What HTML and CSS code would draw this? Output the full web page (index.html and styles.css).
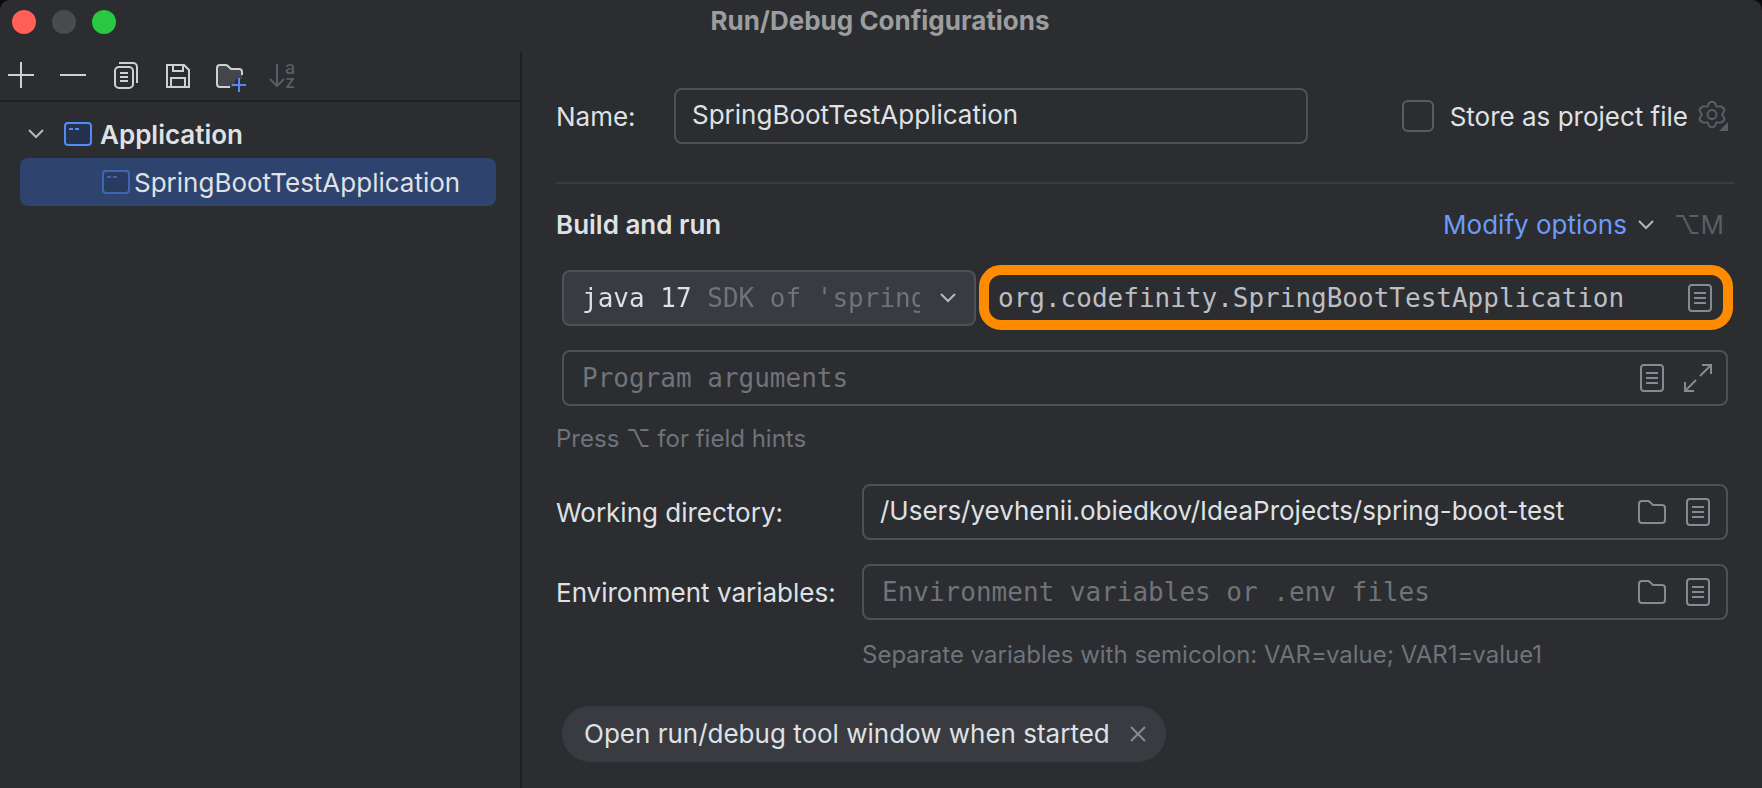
FILE: index.html
```html
<!DOCTYPE html>
<html lang="en">
<head>
<meta charset="utf-8">
<title>Run/Debug Configurations</title>
<link rel="stylesheet" href="styles.css">
</head>
<body>
<svg class="sprite" aria-hidden="true">
  <symbol id="doc" viewBox="0 0 24 28">
    <rect x="1" y="1" width="22" height="26" rx="3"/>
    <path d="M6 9h12M6 14h12M6 19h12"/>
  </symbol>
  <symbol id="folder" viewBox="0 0 28 24">
    <path d="M1 4a3 3 0 0 1 3-3h5.600a3 3 0 0 1 2 .8L15 5h9a3 3 0 0 1 3 3v12a3 3 0 0 1-3 3H4a3 3 0 0 1-3-3z"/>
  </symbol>
  <symbol id="chevron" viewBox="0 0 16 10">
    <path d="M1 1l7 7 7-7"/>
  </symbol>
  <symbol id="app" viewBox="0 0 28 24">
    <rect x="1" y="1" width="26" height="22" rx="3"/>
    <path d="M5 7h4M11 7h4"/>
  </symbol>
</svg>
<div class="window">
  <header class="titlebar">
    <div class="lights">
      <button class="light close" aria-label="Close"></button>
      <button class="light minimize" aria-label="Minimize" disabled></button>
      <button class="light maximize" aria-label="Zoom"></button>
    </div>
    <h1 class="title">Run/Debug Configurations</h1>
  </header>

  <div class="body">
    <aside class="sidebar">
      <div class="toolbar">
        <button class="tool" aria-label="Add"><svg viewBox="0 0 32 32"><path d="M2 16h26M15 3v26"/></svg></button>
        <button class="tool" aria-label="Remove"><svg viewBox="0 0 32 32"><path d="M2 16h26"/></svg></button>
        <button class="tool" aria-label="Copy"><svg viewBox="0 0 32 32"><rect x="5" y="8" width="18" height="21" rx="4"/><path d="M9 4h14a4 4 0 0 1 4 4v16M10 14h8M10 18h8M10 22h8"/></svg></button>
        <button class="tool" aria-label="Save"><svg viewBox="0 0 32 32"><path d="M5 6h17l5 5v17H5zM11 6v6h10V6M9 28v-9h14v9"/></svg></button>
        <button class="tool" aria-label="New folder"><svg viewBox="0 0 32 32"><path class="shade" d="M3 28V8l2-2h8l4 4h11v10h-6l-3 8z"/><path d="M16 28H6a3 3 0 0 1-3-3V9a3 3 0 0 1 3-3h5.600a3 3 0 0 1 2 .8L17 10h8a3 3 0 0 1 3 3v3"/><path class="accent" d="M18 26h14M25 19v14"/></svg></button>
        <button class="tool" aria-label="Sort" disabled><svg viewBox="0 0 32 32"><path d="M11 5v22M4 20l7 7 7-7"/><text class="sort-letter" x="19" y="15">a</text><text class="sort-letter" x="19" y="29">z</text></svg></button>
      </div>
      <div class="tree" role="tree">
        <div class="node" role="treeitem" aria-expanded="true">
          <svg class="chevron"><use href="#chevron"/></svg>
          <svg class="app"><use href="#app"/></svg>
          <span class="strong">Application</span>
        </div>
        <div class="node leaf selected" role="treeitem" aria-selected="true">
          <svg class="app"><use href="#app"/></svg>
          <span>SpringBootTestApplication</span>
        </div>
      </div>
    </aside>

    <main class="panel">
      <div class="name-row">
        <label class="name-label" for="name">Name:</label>
        <div class="field name-field"><input id="name" class="plain" type="text" value="SpringBootTestApplication"></div>
        <div class="store">
          <input class="check" id="store" type="checkbox">
          <label for="store">Store as project file</label>
          <button class="icon-button" aria-label="Store settings">
            <svg class="gear" viewBox="0 0 30 32">
              <path d="M11.500 2.500Q14 1 16.500 2.500L18.500 6.500 23 6.500Q26 7.500 26.500 10.500L24 14.500 26.500 18.500Q26 21.500 23 22.500L18.500 22.500 16.500 26.500Q14 28 11.500 26.500L9.500 22.500 5 22.500Q2 21.500 1.500 18.500L4 14.500 1.500 10.500Q2 7.500 5 6.500L9.500 6.500z"/>
              <circle cx="14" cy="14.500" r="4.500"/>
              <path class="corner" d="M30 22v9h-9z"/>
            </svg>
          </button>
        </div>
      </div>

      <hr class="rule">

      <div class="section-head">
        <h2 class="strong">Build and run</h2>
        <div class="modify">
          <a class="link" href="#options">Modify options</a>
          <svg class="chevron"><use href="#chevron"/></svg>
          <span class="shortcut">⌥M</span>
        </div>
      </div>

      <div class="run-row">
        <div class="field combo">
          <select class="mono" aria-label="Java runtime">
            <option>java 17 SDK of 'spring-boot-test' module</option>
          </select>
          <svg class="chevron"><use href="#chevron"/></svg>
        </div>
        <div class="highlight">
          <input class="mono" type="text" aria-label="Main class" value="org.codefinity.SpringBootTestApplication">
          <button class="icon-button" aria-label="Browse classes"><svg class="doc"><use href="#doc"/></svg></button>
        </div>
      </div>

      <div class="field args">
        <input class="mono" type="text" aria-label="Program arguments" placeholder="Program arguments">
        <button class="icon-button" aria-label="Insert macros"><svg class="doc"><use href="#doc"/></svg></button>
        <button class="icon-button" aria-label="Expand"><svg class="expand" viewBox="0 0 28 28"><path d="M18 1h9v9M27 1L16 12M1 18v9h9M1 27l11-11"/></svg></button>
      </div>
      <p class="hint">Press ⌥ for field hints</p>

      <div class="form">
        <label for="dir">Working directory:</label>
        <div class="field">
          <input id="dir" class="plain" type="text" value="/Users/yevhenii.obiedkov/IdeaProjects/spring-boot-test">
          <button class="icon-button" aria-label="Browse folders"><svg class="folder"><use href="#folder"/></svg></button>
          <button class="icon-button" aria-label="Insert macros"><svg class="doc"><use href="#doc"/></svg></button>
        </div>
        <label for="env">Environment variables:</label>
        <div class="field env">
          <input id="env" class="mono" type="text" placeholder="Environment variables or .env files">
          <button class="icon-button" aria-label="Browse env files"><svg class="folder"><use href="#folder"/></svg></button>
          <button class="icon-button" aria-label="Edit variables"><svg class="doc"><use href="#doc"/></svg></button>
        </div>
        <p class="hint form-hint">Separate variables with semicolon: VAR=value; VAR1=value1</p>
      </div>

      <div class="chip">
        <span>Open run/debug tool window when started</span>
        <button class="icon-button" aria-label="Remove option"><svg class="cross" viewBox="0 0 16 16"><path d="M1 1l14 14M15 1L1 15"/></svg></button>
      </div>
    </main>
  </div>
</div>
</body>
</html>
```

FILE: styles.css
```css
* {
  box-sizing: border-box;
}

body {
  margin: 0;
  background: #0c0c0d;
  color: #dfe1e5;
  font: 26px/32px Inter, "Liberation Sans", sans-serif;
}

h1, h2, p {
  margin: 0;
  font-size: inherit;
}

input, select, button {
  margin: 0;
  padding: 0;
  border: 0;
  background: none;
  color: inherit;
  font: inherit;
}

svg {
  display: block;
  fill: none;
  stroke: currentColor;
  stroke-width: 2;
}

.sprite {
  position: absolute;
  width: 0;
  height: 0;
}

.mono {
  font-family: "DejaVu Sans Mono", "Liberation Mono", monospace;
}

.strong {
  font-weight: 600;
}

.window {
  display: flex;
  flex-direction: column;
  min-height: 100vh;
  border-radius: 10px 10px 0 0;
  background: #2b2d30;
}

.titlebar {
  display: grid;
  grid-template-columns: 1fr auto 1fr;
  align-items: center;
  height: 52px;
  padding: 0 14px 8px 12px;
}

.lights {
  display: flex;
  gap: 16px;
}

.light {
  width: 24px;
  height: 24px;
  border-radius: 50%;
}

.close { background: #ff5f57; }
.minimize { background: #4a4b4d; }
.maximize { background: #28c840; }

.title {
  padding-bottom: 2px;
  color: #9c9d9f;
  font-weight: 700;
}

.body {
  display: flex;
  flex: 1;
}

.sidebar {
  flex: 0 0 522px;
  border-right: 2px solid #1e1f22;
}

.toolbar {
  display: flex;
  gap: 20px;
  height: 50px;
  padding: 7px 6px 0;
  border-bottom: 2px solid #1e1f22;
  color: #ced0d6;
}

.tool, .tool svg {
  width: 32px;
  height: 32px;
}

.tool svg {
  overflow: visible;
}

.tool:disabled { color: #5a5d63; }
.shade { fill: #43454a; stroke: none; }
.accent { stroke: #548af7; }

.sort-letter {
  fill: currentColor;
  stroke: none;
  font-size: 18px;
  font-weight: 500;
}

.tree {
  padding: 8px 24px 0 20px;
}

.node {
  display: flex;
  align-items: center;
  height: 48px;
  padding-left: 8px;
  border-radius: 8px;
}

.node span { padding-top: 2px; }

.node .app {
  margin: 0 8px 0 20px;
}

.leaf .app {
  margin: 0 4px 0 74px;
  color: #3f65b5;
}

.selected { background: #2e436e; }

.chevron {
  flex: none;
  width: 16px;
  height: 10px;
  color: #b4b8bf;
}

.app {
  width: 28px;
  height: 24px;
  color: #548af7;
  fill: #25324d;
}

.leaf .app { fill: #2a3b62; }

.panel {
  flex: 1;
  min-width: 0;
  padding: 36px 28px 16px 34px;
}

.name-row {
  display: flex;
  align-items: center;
  padding-right: 6px;
}

.name-label { width: 118px; }
.name-field { flex: 0 1 634px; }

.name-row label, .form label { padding-top: 2px; }

.field {
  display: flex;
  align-items: center;
  gap: 20px;
  min-width: 0;
  height: 56px;
  padding: 0 16px;
  border: 2px solid #4e5157;
  border-radius: 8px;
}

.field input, .highlight input {
  flex: 1;
  min-width: 0;
  height: 32px;
  outline: 0;
}

.field .plain { padding-bottom: 2px; }

input::placeholder {
  color: #6f737a;
  opacity: 1;
}

.store {
  display: flex;
  align-items: center;
  margin-left: auto;
  white-space: nowrap;
}

.check {
  appearance: none;
  width: 32px;
  height: 32px;
  margin-right: 16px;
  border: 2px solid #5a5d63;
  border-radius: 6px;
}

.icon-button {
  flex: none;
  color: #868a91;
}

.store .icon-button {
  margin-left: 10px;
  color: #5a5d63;
}

.gear { width: 30px; height: 32px; }
.corner { fill: currentColor; stroke: none; }
.doc { width: 24px; height: 28px; }
.folder { width: 28px; height: 24px; }
.expand { width: 28px; height: 28px; }
.cross { width: 16px; height: 16px; }

.rule {
  height: 2px;
  margin: 38px 0 24px;
  border: 0;
  background: #393b40;
}

.section-head, .modify {
  display: flex;
  align-items: center;
}

.section-head {
  justify-content: space-between;
  height: 34px;
  padding-right: 10px;
}

.modify .chevron { margin: 0 20px 0 11px; }
.link { color: #6b9bfa; text-decoration: none; }
.shortcut { color: #5a5d63; }

.run-row {
  display: flex;
  align-items: center;
  gap: 3px;
  margin: 23px 1px 20px 6px;
}

.combo {
  flex: 0 0 414px;
  padding: 0 18px;
  background: #393b40;
}

.combo select {
  appearance: none;
  flex: 1;
  min-width: 0;
  height: 32px;
  outline: 0;
  background: linear-gradient(90deg, #dfe1e5 116px, #6f737a 116px);
  background-clip: text;
  -webkit-background-clip: text;
  color: transparent;
}

.combo option {
  background: #393b40;
  color: #dfe1e5;
}

.highlight {
  display: flex;
  flex: 1;
  align-items: center;
  min-width: 0;
  height: 65px;
  padding: 0 11px 0 9px;
  border: 10px solid #ff8c00;
  border-radius: 22px;
  color: #bcbec4;
}

.args {
  margin: 0 6px;
  padding: 0 14px 0 18px;
}

.env { padding-left: 18px; }

.args + .hint { margin: 18px 0 30px; }

.hint {
  color: #6f737a;
  font-size: 24px;
  line-height: 30px;
}

.form {
  display: grid;
  grid-template-columns: 306px 1fr;
  align-items: center;
  row-gap: 24px;
  margin-right: 6px;
}

.form-hint {
  grid-column: 2;
  margin-top: -4px;
}

.chip {
  display: flex;
  align-items: center;
  gap: 20px;
  width: fit-content;
  height: 56px;
  margin: 36px 0 0 6px;
  padding: 0 20px 0 22px;
  border-radius: 28px;
  background: #393b40;
}
```
